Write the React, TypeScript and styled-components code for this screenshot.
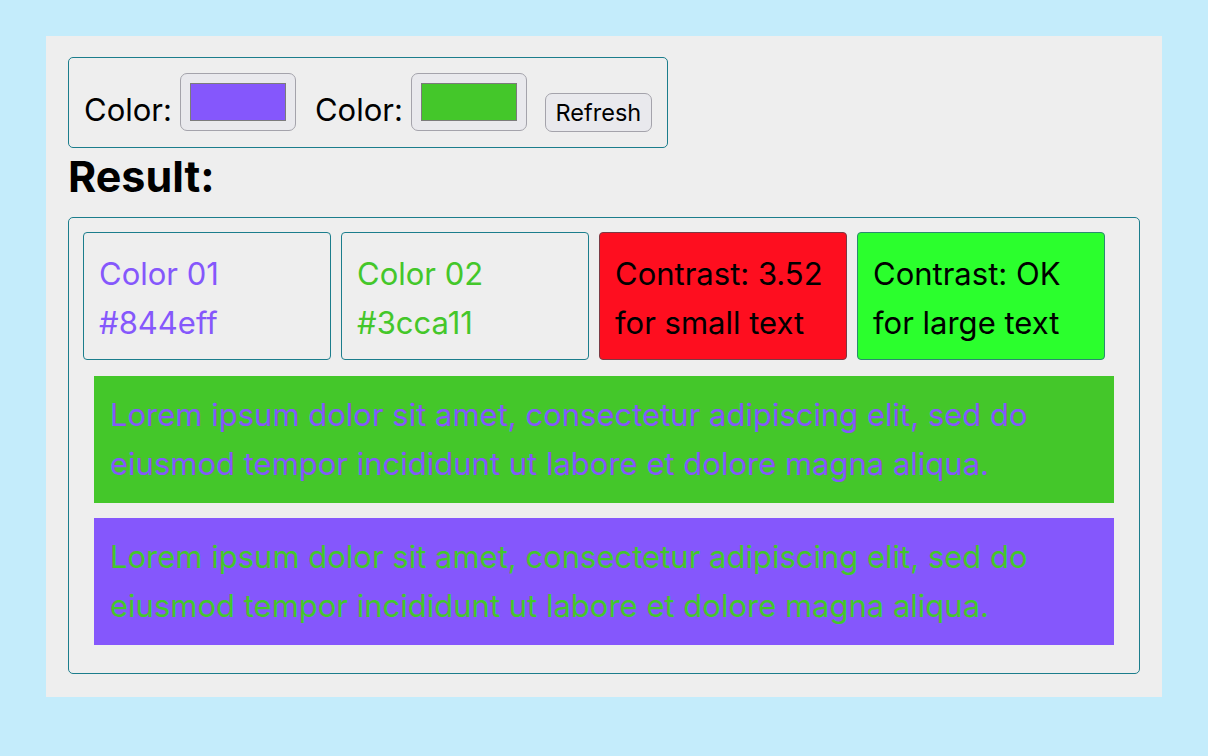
import React from "react";
import styled, { createGlobalStyle } from "styled-components";

const PURPLE = "#8557fc";
const GREEN = "#44c72a";
const TEAL = "#1b7d8c";

const Global = createGlobalStyle`
  html, body {
    margin: 0;
    padding: 0;
    background: #c4ecfb;
  }
  body {
    padding: 36px 46px;
    font-family: Inter, "Noto Sans", "Liberation Sans", sans-serif;
    color: #000;
  }
`;

const Panel = styled.main`
  width: 1116px;
  box-sizing: border-box;
  background: #eeeeee;
  padding: 21px 22px 23px 22px;
`;

const Controls = styled.section`
  width: 600px;
  height: 91px;
  box-sizing: border-box;
  border: 1px solid ${TEAL};
  border-radius: 5px;
  padding: 15px 15px 16px 15px;
  display: flex;
  align-items: flex-end;
`;

const Label = styled.label<{ $gap: number }>`
  display: flex;
  align-items: flex-end;
  font-size: 31px;
  margin-right: ${(p) => p.$gap}px;
`;

const LabelText = styled.span`
  line-height: 38px;
  margin-right: 8px;
  margin-bottom: 2px;
`;

const ColorWell = styled.span`
  display: flex;
  align-items: center;
  justify-content: center;
  width: 116px;
  height: 58px;
  box-sizing: border-box;
  background: #e9e9ed;
  border: 1px solid #a4a3ab;
  border-radius: 7px;
`;

const Swatch = styled.span<{ $color: string }>`
  display: block;
  width: 96px;
  height: 38px;
  box-sizing: border-box;
  background: ${(p) => p.$color};
  border: 1px solid #7b7b7b;
`;

const RefreshButton = styled.button`
  width: 107px;
  height: 39px;
  margin-bottom: -1px;
  box-sizing: border-box;
  background: #e9e9ed;
  border: 1px solid #a4a3ab;
  border-radius: 7px;
  font-family: inherit;
  font-size: 23.5px;
  color: #000;
  padding: 0;
`;

const Heading = styled.h2`
  margin: 0;
  height: 69px;
  box-sizing: border-box;
  padding-top: 2px;
  font-size: 43px;
  line-height: normal;
  font-weight: 700;
`;

const ResultBox = styled.section`
  width: 1072px;
  box-sizing: border-box;
  border: 1px solid ${TEAL};
  border-radius: 5px;
  padding: 14px;
`;

const CardsRow = styled.div`
  display: flex;
  gap: 10px;
`;

const Card = styled.div<{ $bg?: string; $fg: string; $border: string }>`
  width: 248px;
  height: 128px;
  box-sizing: border-box;
  border: 1px solid ${(p) => p.$border};
  border-radius: 4px;
  background: ${(p) => p.$bg ?? "transparent"};
  color: ${(p) => p.$fg};
  padding: 16px 15px 12px 15px;
  font-size: 31px;
  line-height: 49px;
  white-space: nowrap;
`;

const Sample = styled.p<{ $bg: string; $fg: string }>`
  margin: 16px 11px 0 11px;
  background: ${(p) => p.$bg};
  color: ${(p) => p.$fg};
  padding: 14px 16px 15px 16px;
  font-size: 31px;
  line-height: 49px;
  & + & {
    margin-top: 15px;
    margin-bottom: 14px;
  }
`;

const LOREM =
  "Lorem ipsum dolor sit amet, consectetur adipiscing elit, sed do eiusmod tempor incididunt ut labore et dolore magna aliqua.";

export default function App() {
  return (
    <>
      <Global />
      <Panel>
        <Controls>
          <Label $gap={19}>
            <LabelText>Color:</LabelText>
            <ColorWell>
              <Swatch $color={PURPLE} />
            </ColorWell>
          </Label>
          <Label $gap={18}>
            <LabelText>Color:</LabelText>
            <ColorWell>
              <Swatch $color={GREEN} />
            </ColorWell>
          </Label>
          <RefreshButton>Refresh</RefreshButton>
        </Controls>
        <Heading>Result:</Heading>
        <ResultBox>
          <CardsRow>
            <Card $fg={PURPLE} $border={TEAL}>
              Color 01
              <br />
              #844eff
            </Card>
            <Card $fg={GREEN} $border={TEAL}>
              Color 02
              <br />
              #3cca11
            </Card>
            <Card $bg="#fe0e1f" $fg="#000" $border="#7a3a44">
              Contrast: 3.52
              <br />
              for small text
            </Card>
            <Card $bg="#2bff2d" $fg="#000" $border="#2a8a70">
              Contrast: OK
              <br />
              for large text
            </Card>
          </CardsRow>
          <Sample $bg={GREEN} $fg={PURPLE}>
            {LOREM}
          </Sample>
          <Sample $bg={PURPLE} $fg={GREEN}>
            {LOREM}
          </Sample>
        </ResultBox>
      </Panel>
    </>
  );
}
